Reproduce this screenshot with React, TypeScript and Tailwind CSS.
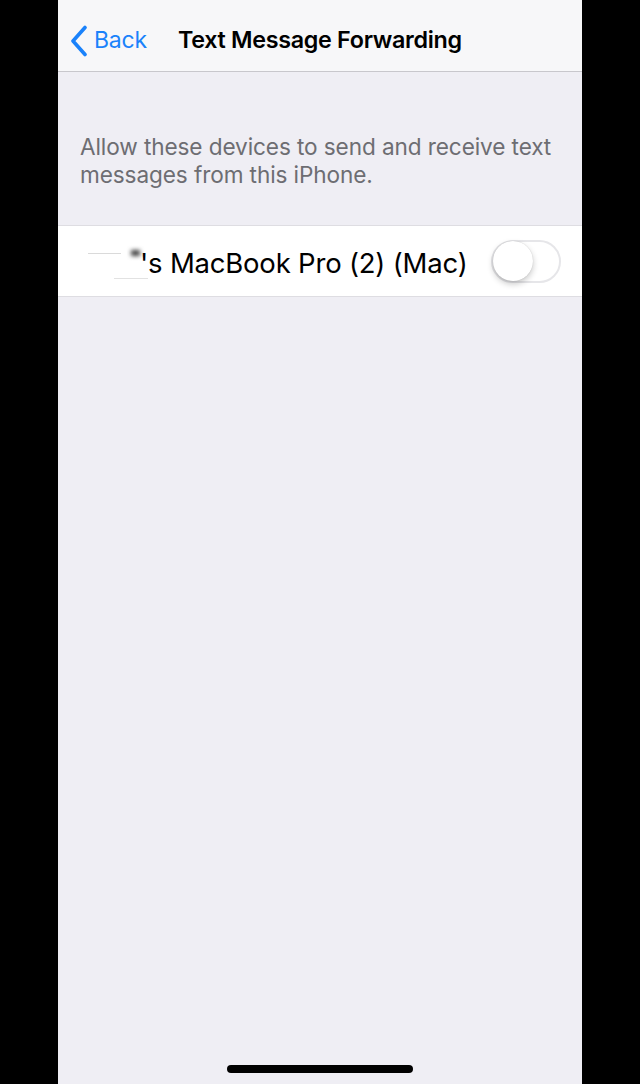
const App = () => {
    return (
        <div className="w-[640px] h-[1084px] bg-black flex justify-center" style={{ fontFamily: "Inter, 'Noto Sans', sans-serif" }}>
            <div className="w-[524px] h-full bg-[#efeef4] flex flex-col">
                {/* nav bar */}
                <div className="h-[72px] bg-[#f7f7f9] border-b border-[#c8c7cc] flex items-center pt-[10px]">
                    <div className="flex items-center pl-[12px] w-[120px]">
                        <svg width="18" height="32" viewBox="0 0 18 32" fill="none">
                            <path d="M15 2.5 L3 16 L15 29.5" stroke="#1a82fb" strokeWidth="3.6" strokeLinecap="round" strokeLinejoin="round" />
                        </svg>
                        <span className="text-[23px] text-[#1a82fb] ml-[6px] tracking-[-0.2px]">Back</span>
                    </div>
                    <span className="text-[23.3px] font-semibold text-black tracking-[-0.3px]">Text Message Forwarding</span>
                </div>

                {/* section header */}
                <div className="pt-[61px] pb-[36px] px-[22px]">
                    <p className="text-[22.6px] leading-[28px] text-[#6d6d72] tracking-[-0.1px]">
                        Allow these devices to send and receive text messages from this iPhone.
                    </p>
                </div>

                {/* device row */}
                <div className="h-[72px] bg-white border-y border-[#dedde2] flex items-center justify-between pl-[30px] pr-[21px]">
                    <div className="flex items-center pt-[5px]">
                        <div className="w-[52px] h-[60px] flex flex-col justify-center gap-[22px] pt-[2px]">
                            <div className="flex justify-end items-center">
                                <div className="w-[36px] h-px bg-[#dadada] mr-[10px]" />
                                <div className="w-[10px] h-[6px] bg-[#444] blur-[2px]" />
                            </div>
                            <div className="w-[34px] h-px bg-[#e2e2e2] ml-[26px]" />
                        </div>
                        <span className="text-[27.5px] text-black tracking-[-0.2px]">'s MacBook Pro (2) (Mac)</span>
                    </div>
                    <div className="w-[70px] h-[43px] rounded-full border-[2px] border-[#e6e6e9] bg-white flex items-center">
                        <div className="w-[40px] h-[40px] rounded-full bg-white shadow-[0_3px_6px_rgba(0,0,0,0.22),0_0_1px_rgba(0,0,0,0.2)]" />
                    </div>
                </div>

                <div className="flex-1" />

                {/* home indicator */}
                <div className="h-[19px] flex justify-center">
                    <div className="w-[186px] h-[8px] rounded-full bg-black" />
                </div>
            </div>
        </div>
    );
}

export default App;
